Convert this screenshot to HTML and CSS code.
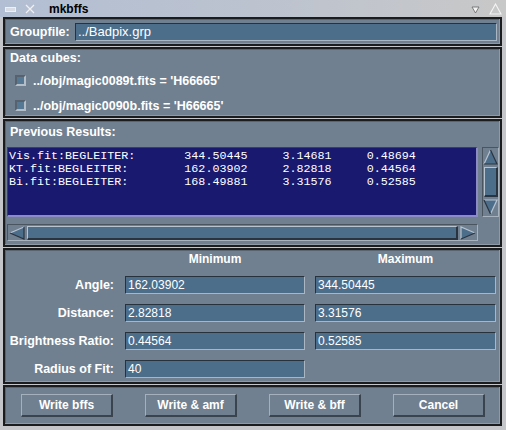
FILE: index.html
```html
<!DOCTYPE html>
<html>
<head>
<meta charset="utf-8">
<link rel="stylesheet" href="styles.css">
</head>
<body>
<div class="window">
  <div class="titlebar">
    <span class="tb-min"></span>
    <svg class="tb-close" width="10" height="10" viewBox="0 0 10 10"><path d="M1 1 L9 9 M9 1 L1 9" stroke="#f0f0f0" stroke-width="1.3" fill="none"/></svg>
    <span class="tb-title">mkbffs</span>
    <span class="tb-spacer"></span>
    <svg class="tb-shade" width="9" height="8" viewBox="0 0 9 8"><path d="M1 1 L8 1 L4.5 7 Z" fill="#f4f4f4" stroke="#666" stroke-width="0.8"/></svg>
    <svg class="tb-max" width="13" height="12" viewBox="0 0 13 12"><path d="M6.5 1 L12 11 L1 11 Z" fill="none" stroke="#f4f4f4" stroke-width="1.1"/></svg>
  </div>
  <div class="client">
    <div class="panel p-group">
      <span class="lbl">Groupfile:</span>
      <div class="entry wide">../Badpix.grp</div>
    </div>
    <div class="panel p-cubes">
      <div class="lbl">Data cubes:</div>
      <div class="check-row"><span class="cb"></span><span class="lbl">../obj/magic0089t.fits = 'H66665'</span></div>
      <div class="check-row"><span class="cb"></span><span class="lbl">../obj/magic0090b.fits = 'H66665'</span></div>
    </div>
    <div class="panel p-results">
      <div class="lbl">Previous Results:</div>
      <div class="list-area">
        <div class="listbox">
<pre class="rows">Vis.fit:BEGLEITER:       344.50445     3.14681     0.48694
KT.fit:BEGLEITER:        162.03902     2.82818     0.44564
Bi.fit:BEGLEITER:        168.49881     3.31576     0.52585</pre>
        </div>
        <div class="vscroll">
          <svg class="arrow-v" width="15" height="16" viewBox="0 0 15 16"><path d="M7.5 1 L14 15 L1 15 Z" fill="#4c6e8b"/><path d="M7.5 1 L1 15" stroke="#b8c4d0" stroke-width="1.2"/><path d="M7.5 1 L14 15 L1 15" stroke="#2a3440" stroke-width="1.2" fill="none"/></svg>
          <div class="vslider"></div>
          <svg class="arrow-v" width="15" height="16" viewBox="0 0 15 16"><path d="M7.5 15 L14 1 L1 1 Z" fill="#4c6e8b"/><path d="M1 1 L14 1 L7.5 15" stroke="#b8c4d0" stroke-width="1.2" fill="none"/><path d="M7.5 15 L1 1" stroke="#2a3440" stroke-width="1.2"/></svg>
        </div>
        <div class="hscroll">
          <svg class="arrow-h" width="16" height="14" viewBox="0 0 16 14"><path d="M1 7 L15 1 L15 13 Z" fill="#4c6e8b"/><path d="M1 7 L15 1" stroke="#b8c4d0" stroke-width="1.2"/><path d="M15 1 L15 13 L1 7" stroke="#2a3440" stroke-width="1.2" fill="none"/></svg>
          <div class="hslider"></div>
          <svg class="arrow-h" width="16" height="14" viewBox="0 0 16 14"><path d="M15 7 L1 1 L1 13 Z" fill="#4c6e8b"/><path d="M15 7 L1 1 L1 13" stroke="#b8c4d0" stroke-width="1.2" fill="none"/><path d="M1 13 L15 7" stroke="#2a3440" stroke-width="1.2"/></svg>
        </div>
      </div>
    </div>
    <div class="panel p-params">
      <span></span><span class="hdr">Minimum</span><span class="hdr">Maximum</span>
      <span class="lbl plbl">Angle:</span><div class="entry">162.03902</div><div class="entry">344.50445</div>
      <span class="lbl plbl">Distance:</span><div class="entry">2.82818</div><div class="entry">3.31576</div>
      <span class="lbl plbl">Brightness Ratio:</span><div class="entry">0.44564</div><div class="entry">0.52585</div>
      <span class="lbl plbl">Radius of Fit:</span><div class="entry">40</div><span></span>
    </div>
    <div class="panel p-buttons">
      <div class="btn">Write bffs</div>
      <div class="btn">Write &amp; amf</div>
      <div class="btn">Write &amp; bff</div>
      <div class="btn">Cancel</div>
    </div>
  </div>
</div>
</body>
</html>
```
FILE: styles.css
```css
html, body {
  margin: 0;
  padding: 0;
  background: #c4c6c9;
}
.window {
  width: 506px;
  height: 430px;
  background: #c4c6c9;
  display: flex;
  flex-direction: column;
  font-family: "Liberation Sans", Arial, sans-serif;
  overflow: hidden;
}
.titlebar {
  height: 17px;
  display: flex;
  align-items: center;
  background: linear-gradient(to right, #b2bed3 0%, #bcc3cf 50%, #c8c8c8 100%);
  padding: 0 4px 0 5px;
}
.tb-min {
  width: 9px;
  height: 3px;
  border: 1px solid #f0f0f0;
  background: #d8dce4;
  margin-top: 1px;
}
.tb-close { margin-left: 9px; }
.tb-title {
  margin-left: 14px;
  font-weight: bold;
  font-size: 12px;
  color: #000;
}
.tb-spacer { flex: 1; }
.tb-shade { margin-right: 9px; margin-top: 2px; }
.tb-max { margin-top: 1px; }
.client {
  flex: 1;
  margin: 0 4px 4px 3px;
  display: flex;
  flex-direction: column;
  gap: 1px;
}
.panel {
  background: #708090;
  border: 2px solid #1a1c1e;
  box-shadow: inset -1px -1px 0 #8e9aa6, inset 1px 1px 0 #58646f;
  box-sizing: border-box;
}
.lbl {
  color: #fff;
  font-weight: bold;
  font-size: 12.5px;
}
.entry {
  background: #4c6e8b;
  color: #fff;
  font-size: 12px;
  height: 18px;
  line-height: 16px;
  box-sizing: border-box;
  border-top: 1px solid #27323c;
  border-left: 1px solid #27323c;
  border-bottom: 1px solid #aab6c2;
  border-right: 1px solid #aab6c2;
  padding-left: 2px;
}
.p-group {
  height: 29px;
  display: flex;
  align-items: center;
  padding: 0 3px 0 5px;
}
.p-group .lbl { width: 65px; }
.p-group .entry { flex: 1; font-size: 13px; }
.p-cubes {
  height: 71px;
  padding: 2px 5px 0 5px;
}
.p-cubes > .lbl { line-height: 14px; display: block; }
.check-row {
  display: flex;
  align-items: center;
  height: 25px;
  margin-top: 3px;
}
.check-row + .check-row { margin-top: 0; }
.cb {
  width: 11px;
  height: 11px;
  box-sizing: border-box;
  background: #557894;
  border-top: 2px solid #56626e;
  border-left: 2px solid #56626e;
  border-bottom: 2px solid #b4bec8;
  border-right: 2px solid #b4bec8;
  margin-left: 5px;
  margin-right: 7px;
}
.p-results {
  height: 128px;
  padding: 4px 0 0 2px;
}
.p-results > .lbl { line-height: 14px; display: block; margin-left: 3px; }
.list-area {
  margin-top: 8px;
  display: grid;
  grid-template-columns: 471px 17px;
  grid-template-rows: 70px 17px;
  column-gap: 4px;
  row-gap: 7px;
}
.listbox {
  background: #191970;
  box-sizing: border-box;
  border-top: 1px solid #3c3c68;
  border-left: 1px solid #3c3c68;
  border-bottom: 2px solid #8c8cc4;
  border-right: 2px solid #8c8cc4;
  overflow: hidden;
}
.rows {
  margin: 0;
  padding: 2px 0 0 1px;
  font-family: "Liberation Mono", "Courier New", monospace;
  font-size: 11.7px;
  line-height: 13px;
  color: #fff;
}
.vscroll, .hscroll {
  background: #708090;
  box-sizing: border-box;
  border-top: 1px solid #4a5560;
  border-left: 1px solid #4a5560;
  border-bottom: 1px solid #a6b2be;
  border-right: 1px solid #a6b2be;
  display: flex;
}
.vscroll { flex-direction: column; align-items: center; padding: 1px 0; }
.hscroll { align-items: center; padding: 0 1px; }
.vslider {
  flex: 1;
  width: 14px;
  margin: 2px 0;
  background: #4c6e8b;
  box-sizing: border-box;
  border-top: 1px solid #b8c4d0;
  border-left: 1px solid #b8c4d0;
  border-bottom: 2px solid #2a3440;
  border-right: 2px solid #2a3440;
}
.hslider {
  flex: 1;
  height: 14px;
  margin: 0 2px;
  background: #4c6e8b;
  box-sizing: border-box;
  border-top: 1px solid #b8c4d0;
  border-left: 1px solid #b8c4d0;
  border-bottom: 2px solid #2a3440;
  border-right: 2px solid #2a3440;
}
.arrow-v, .arrow-h { display: block; flex: none; }
.p-params {
  height: 136px;
  padding: 2px 0 0 0;
  display: grid;
  grid-template-columns: 110px 180px 181px;
  grid-template-rows: 14px repeat(4, 18px);
  column-gap: 10px;
  row-gap: 10px;
}
.hdr {
  color: #fff;
  font-weight: bold;
  font-size: 12px;
  line-height: 14px;
  text-align: center;
}
.plbl {
  text-align: right;
  line-height: 18px;
  padding-right: 1px;
}
.p-params .entry { font-size: 12px; }
.p-buttons {
  flex: 1;
  display: flex;
  gap: 32px;
  padding: 7px 0 0 16px;
}
.btn {
  width: 92px;
  height: 23px;
  box-sizing: border-box;
  background: #708090;
  color: #fff;
  font-weight: bold;
  font-size: 12px;
  display: flex;
  align-items: center;
  justify-content: center;
  border-top: 1px solid #a4b0bc;
  border-left: 1px solid #a4b0bc;
  border-bottom: 2px solid #3a444e;
  border-right: 2px solid #3a444e;
}
```
